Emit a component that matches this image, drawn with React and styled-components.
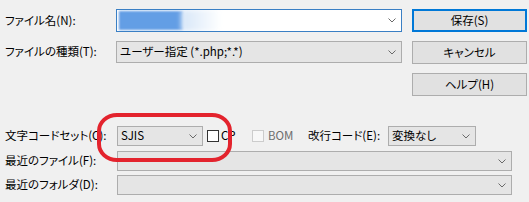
import React from 'react'
import styled, { createGlobalStyle } from 'styled-components'

const GlobalStyle = createGlobalStyle`
    html, body {
        margin: 0;
        padding: 0;
        background: #f0f0f0;
    }
    body {
        font-family: "Noto Sans CJK JP", "Noto Sans", sans-serif;
        font-size: 11.5px;
        font-feature-settings: "palt";
        color: #000;
    }
`

const StyledDialog = styled.div`
    position: relative;
    width: 529px;
    height: 202px;
    padding: 9px 0 0 5px;
    box-sizing: border-box;
    overflow: hidden;
`

const StyledTop = styled.div`
    display: grid;
    grid-template-columns: 111px 286px 125px;
    grid-template-rows: 23px 22px 23px;
    row-gap: 9px;
`

const StyledLabel = styled.label`
    display: flex;
    align-items: center;
    white-space: nowrap;
    line-height: 1;
    width: ${(p) => p.width || 'auto'};
    flex-shrink: 0;
    color: ${(p) => (p.disabled ? '#6d6d6d' : '#000')};
`

const StyledCombo = styled.div`
    position: relative;
    display: flex;
    align-items: center;
    box-sizing: border-box;
    height: ${(p) => p.height || '20px'};
    width: ${(p) => p.width || 'auto'};
    flex-shrink: 0;
    padding: 0 5px 0 3px;
    border: 1px solid ${(p) => (p.focused ? '#3a7fc4' : '#adadad')};
    background: ${(p) => (p.editable ? '#fff' : '#e5e5e5')};
    overflow: hidden;
`

const StyledComboText = styled.span`
    flex: 1;
    white-space: nowrap;
    line-height: 1;
`

const StyledSelection = styled.div`
    position: absolute;
    left: 2px;
    top: 1px;
    width: 64px;
    height: 19px;
    background: repeating-linear-gradient(
        90deg,
        #5a97e2 0 2px,
        #76abec 2px 3px
    );
    filter: blur(1.3px);
    &::after {
        content: '';
        position: absolute;
        left: 62px;
        top: -1px;
        width: 40px;
        height: 21px;
        background: linear-gradient(90deg, #d7e6f8, #fff);
        filter: blur(2px);
    }
`

const StyledButton = styled.button`
    justify-self: end;
    box-sizing: border-box;
    height: 23px;
    width: 115px;
    margin-top: ${(p) => p.offset || '0'};
    padding: 0;
    font: inherit;
    color: #000;
    background: #e1e1e1;
    border: ${(p) => (p.primary ? '2px solid #0078d7' : '1px solid #adadad')};
    line-height: 1;
`

const StyledSpacer = styled.div`
    height: 31px;
`

const StyledRow = styled.div`
    display: flex;
    align-items: center;
    height: 20px;
    margin-bottom: ${(p) => p.gap || '4px'};
`

const StyledCheck = styled.span`
    display: inline-block;
    box-sizing: border-box;
    width: 12px;
    height: 12px;
    flex-shrink: 0;
    margin: ${(p) => p.margin || '0'};
    border: 1px solid ${(p) => (p.disabled ? '#cccccc' : '#333333')};
    background: ${(p) => (p.disabled ? '#f7f7f7' : '#fff')};
`

const StyledHighlight = styled.div`
    position: absolute;
    left: 97px;
    top: 113px;
    width: 135px;
    height: 49px;
    box-sizing: border-box;
    border: 4px solid #e3232d;
    border-radius: 20px / 18px;
    pointer-events: none;
`

function Chevron() {
    return (
        <svg width="8" height="5" viewBox="0 0 8 5">
            <polyline
                points="0.5,0.5 4,4 7.5,0.5"
                fill="none"
                stroke="#6a6a6a"
                strokeWidth="1"
            />
        </svg>
    )
}

function Combo({ children, ...props }) {
    return (
        <StyledCombo {...props}>
            <StyledComboText>{children}</StyledComboText>
            <Chevron />
        </StyledCombo>
    )
}

export default function App() {
    return (
        <>
            <GlobalStyle />
            <StyledDialog>
                <StyledTop>
                    <StyledLabel>ファイル名(N):</StyledLabel>
                    <Combo height="23px" editable focused>
                        <StyledSelection />
                    </Combo>
                    <StyledButton primary>保存(S)</StyledButton>

                    <StyledLabel>ファイルの種類(T):</StyledLabel>
                    <Combo height="22px">ユーザー指定 (*.php;*.*)</Combo>
                    <StyledButton>キャンセル</StyledButton>

                    <div />
                    <div />
                    <StyledButton offset="1px">ヘルプ(H)</StyledButton>
                </StyledTop>

                <StyledSpacer />

                <StyledRow gap="5px">
                    <StyledLabel width="112px">文字コードセット(C):</StyledLabel>
                    <Combo width="86px">SJIS</Combo>
                    <StyledCheck margin="0 2px 0 4px" />
                    <StyledLabel width="29px">CP</StyledLabel>
                    <StyledCheck disabled margin="0 4px 0 2px" />
                    <StyledLabel width="40px" disabled>
                        BOM
                    </StyledLabel>
                    <StyledLabel width="80px">改行コード(E):</StyledLabel>
                    <Combo width="88px">変換なし</Combo>
                </StyledRow>

                <StyledRow>
                    <StyledLabel width="112px">最近のファイル(F):</StyledLabel>
                    <Combo width="395px" />
                </StyledRow>

                <StyledRow>
                    <StyledLabel width="112px">最近のフォルダ(D):</StyledLabel>
                    <Combo width="395px" />
                </StyledRow>

                <StyledHighlight />
            </StyledDialog>
        </>
    )
}
